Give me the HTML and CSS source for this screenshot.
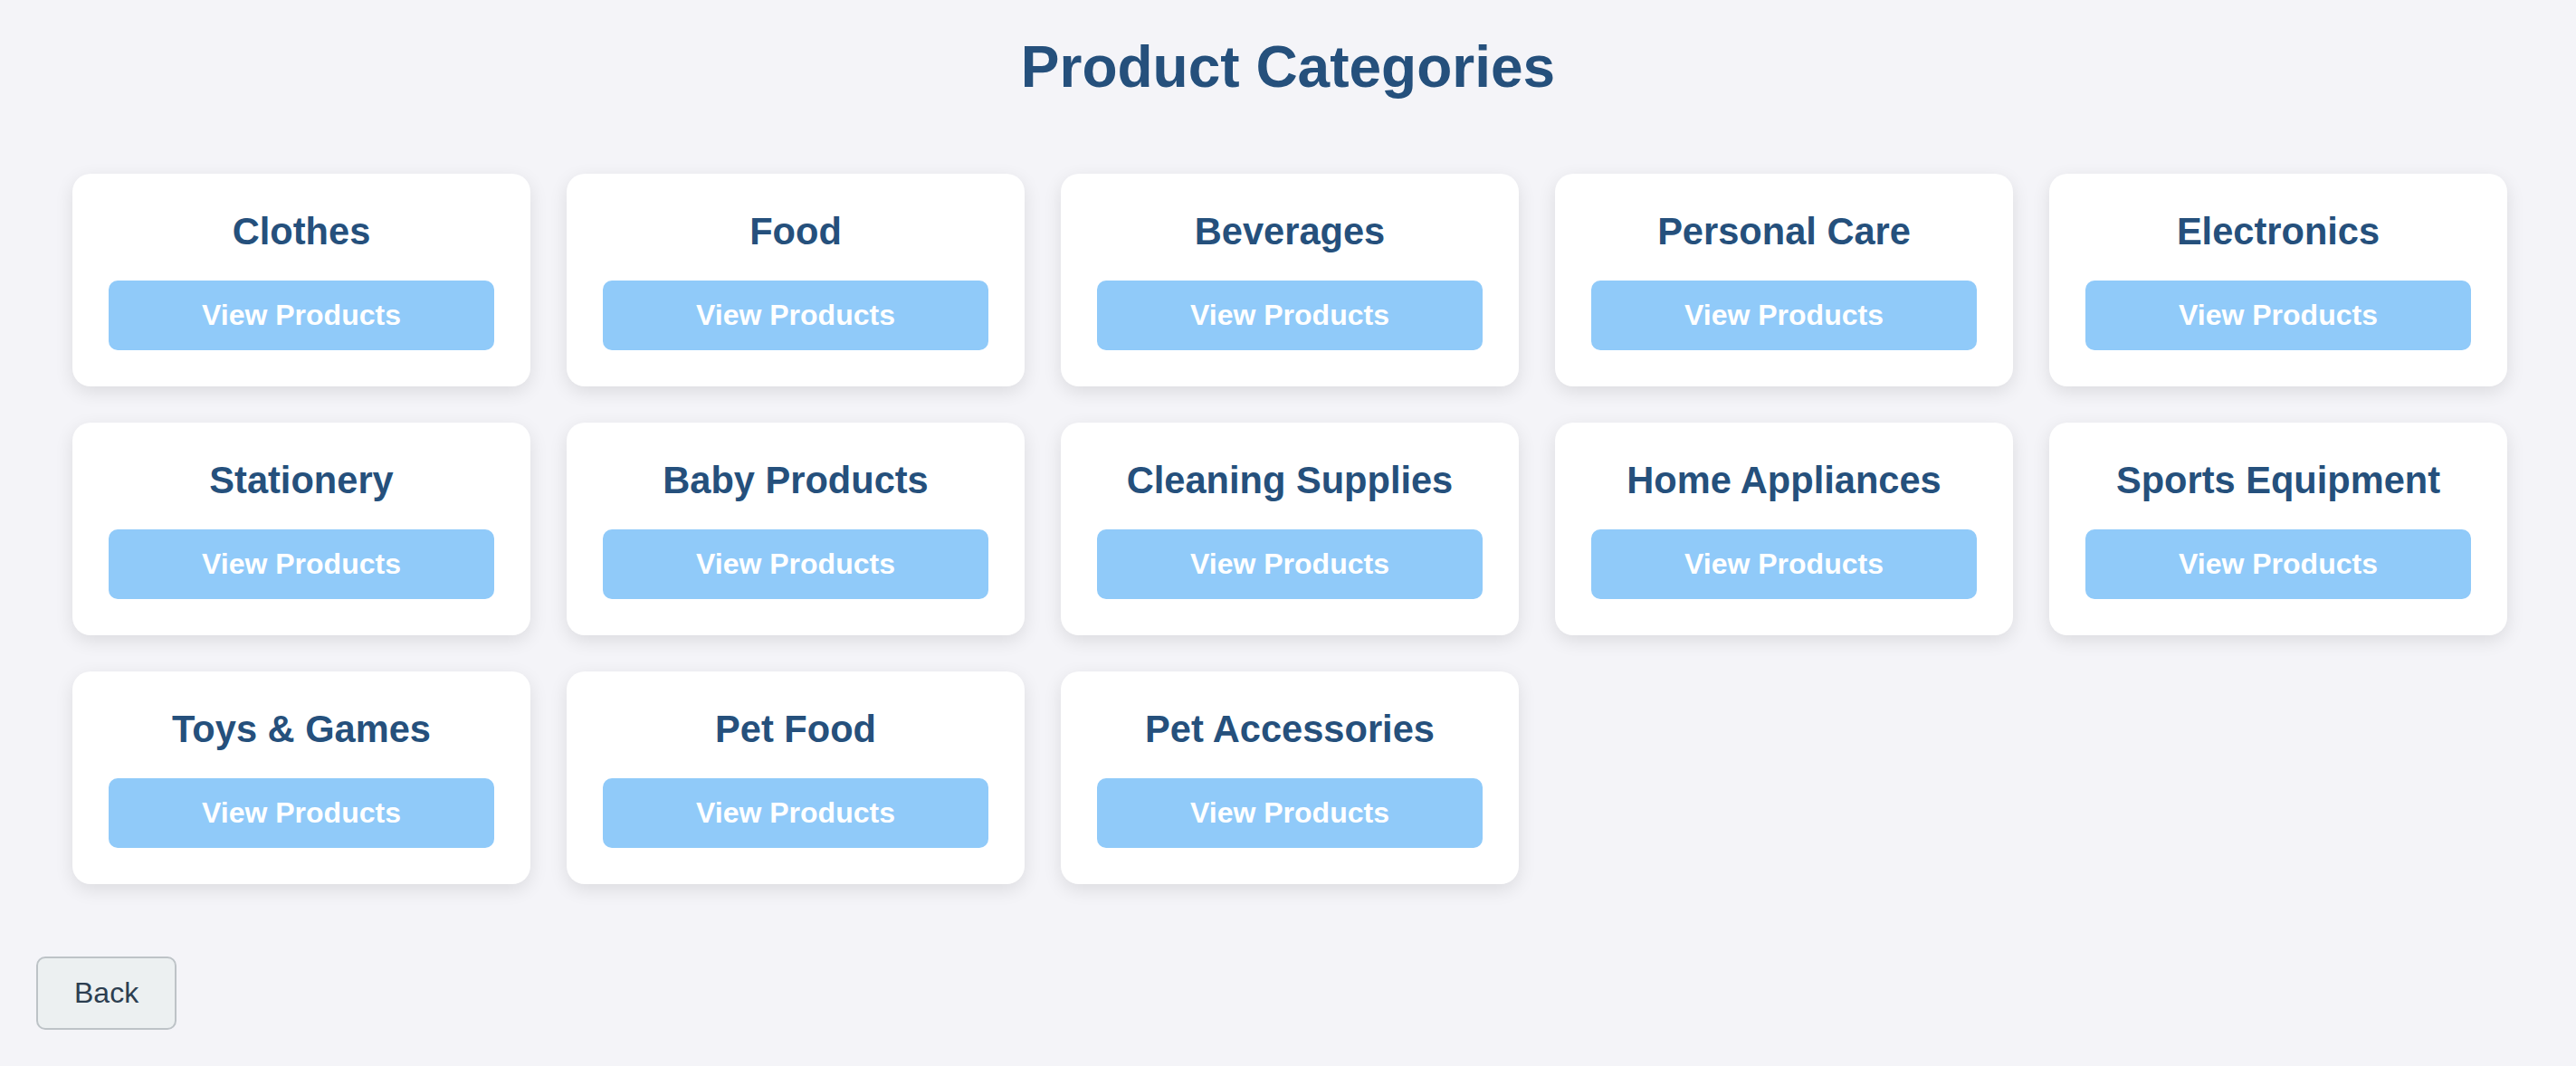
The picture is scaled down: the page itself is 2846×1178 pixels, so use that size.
FILE: index.html
```html
<!DOCTYPE html>
<html lang="en">
<head>
<meta charset="utf-8">
<title>Product Categories</title>
<link rel="stylesheet" href="styles.css">
</head>
<body>
<div class="page">
  <h1 class="page-title">Product Categories</h1>
  <div class="grid">
    <div class="card"><h3 class="card-title">Clothes</h3><button class="view-btn">View Products</button></div>
    <div class="card"><h3 class="card-title">Food</h3><button class="view-btn">View Products</button></div>
    <div class="card"><h3 class="card-title">Beverages</h3><button class="view-btn">View Products</button></div>
    <div class="card"><h3 class="card-title">Personal Care</h3><button class="view-btn">View Products</button></div>
    <div class="card"><h3 class="card-title">Electronics</h3><button class="view-btn">View Products</button></div>
    <div class="card"><h3 class="card-title">Stationery</h3><button class="view-btn">View Products</button></div>
    <div class="card"><h3 class="card-title">Baby Products</h3><button class="view-btn">View Products</button></div>
    <div class="card"><h3 class="card-title">Cleaning Supplies</h3><button class="view-btn">View Products</button></div>
    <div class="card"><h3 class="card-title">Home Appliances</h3><button class="view-btn">View Products</button></div>
    <div class="card"><h3 class="card-title">Sports Equipment</h3><button class="view-btn">View Products</button></div>
    <div class="card"><h3 class="card-title">Toys &amp; Games</h3><button class="view-btn">View Products</button></div>
    <div class="card"><h3 class="card-title">Pet Food</h3><button class="view-btn">View Products</button></div>
    <div class="card"><h3 class="card-title">Pet Accessories</h3><button class="view-btn">View Products</button></div>
  </div>
  <button class="back-btn">Back</button>
</div>
</body>
</html>
```
FILE: styles.css
```css
html, body {
  margin: 0;
  padding: 0;
  background: #f4f4f8;
}
body {
  font-family: "Liberation Sans", Arial, sans-serif;
}
.page {
  padding: 37px 40px 40px;
}
.page-title {
  margin: 0 0 81px;
  text-align: center;
  font-size: 64px;
  font-weight: bold;
  color: #25507c;
}
.grid {
  display: grid;
  grid-template-columns: repeat(5, 1fr);
  gap: 40px;
  padding: 0 36px 0 40px;
}
.card {
  background: #ffffff;
  border-radius: 20px;
  box-shadow: 0 6px 20px rgba(0, 0, 0, 0.1);
  padding: 40px;
  text-align: center;
  display: flex;
  flex-direction: column;
}
.card-title {
  margin: 0 0 30px;
  font-size: 41.6px;
  font-weight: bold;
  color: #25507c;
}
.view-btn {
  display: block;
  width: 100%;
  border: none;
  border-radius: 10px;
  background: #90caf9;
  color: #ffffff;
  font-family: "Liberation Sans", Arial, sans-serif;
  font-size: 32px;
  font-weight: bold;
  padding: 20px;
  line-height: normal;
}
.back-btn {
  display: block;
  margin-top: 80px;
  padding: 20px 40px;
  border: 2px solid #bdc3c7;
  border-radius: 10px;
  background: #ecf0f1;
  color: #2c3e50;
  font-family: "Liberation Sans", Arial, sans-serif;
  font-size: 32px;
  line-height: normal;
}
```
